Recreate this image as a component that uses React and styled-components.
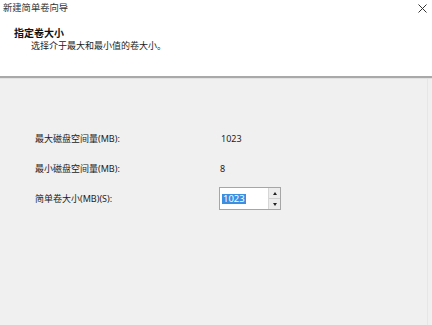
import React from "react";
import styled, { createGlobalStyle } from "styled-components";

const Global = createGlobalStyle`
  html, body {
    margin: 0;
    padding: 0;
    background: #f0f0f0;
  }
  * {
    box-sizing: border-box;
  }
`;

const font = `"Noto Sans", "Noto Sans CJK SC", sans-serif`;

const Window = styled.div`
  width: 432px;
  height: 325px;
  display: flex;
  flex-direction: column;
  font-family: ${font};
  color: #1a1a1a;
  overflow: hidden;
`;

const Top = styled.div`
  background: #fff;
  height: 79px;
  border-bottom: 1px solid #e2e2e2;
  box-shadow: inset 0 -2px 0 #a9a9a9;
  display: flex;
  flex-direction: column;
`;

const TitleBar = styled.div`
  height: 16px;
  display: flex;
  align-items: center;
  justify-content: space-between;
  padding: 0 5px 0 3px;
  font-size: 9.3px;
  line-height: 16px;
  color: #333;
`;

const Close = styled.svg`
  width: 9px;
  height: 9px;
`;

const Header = styled.div`
  display: flex;
  flex-direction: column;
  padding: 11px 0 0 14px;
`;

const Heading = styled.div`
  font-size: 10px;
  font-weight: 700;
  line-height: 12px;
  color: #111;
`;

const Sub = styled.div`
  font-size: 9px;
  line-height: 12px;
  margin: 1px 0 0 17px;
  color: #222;
`;

const Body = styled.div`
  flex: 1;
  background: #f0f0f0;
  padding-top: 48px;
  margin-right: 4px;
  border-right: 1px solid #e6e6e6;
`;

const Form = styled.div`
  display: grid;
  grid-template-columns: 184px auto;
  grid-auto-rows: 23px;
  row-gap: 7px;
  padding-left: 35px;
  align-items: center;
  font-size: 9px;
`;

const Label = styled.div`
  line-height: 12px;
  color: #222;
`;

const Value = styled.div`
  line-height: 12px;
  padding-left: ${(p) => p.$pad || 2}px;
  color: #222;
`;

const Spin = styled.div`
  display: flex;
  width: 62px;
  height: 23px;
  border: 1px solid #a6a6a6;
  background: #fff;
`;

const SpinField = styled.div`
  flex: 1;
  display: flex;
  align-items: center;
  padding-left: 2px;
`;

const Selected = styled.span`
  background: #3b8ee0;
  color: #fff;
  font-size: 9.5px;
  line-height: 10px;
  padding: 0 1px;
`;

const SpinButtons = styled.div`
  width: 12px;
  display: flex;
  flex-direction: column;
  border-left: 1px solid #d6d6d6;
  background: #ececec;
`;

const SpinBtn = styled.div`
  flex: 1;
  display: flex;
  align-items: center;
  justify-content: center;
  & + & {
    border-top: 1px solid #d0d0d0;
  }
  &::before {
    content: "";
    border-left: 2.5px solid transparent;
    border-right: 2.5px solid transparent;
    ${(p) =>
      p.$down
        ? "border-top: 3px solid #222;"
        : "border-bottom: 3px solid #222;"}
  }
`;

export default function App() {
  return (
    <>
      <Global />
      <Window>
        <Top>
          <TitleBar>
            <span>新建简单卷向导</span>
            <Close viewBox="0 0 9 9">
              <path d="M0.5 0.5L8.5 8.5M8.5 0.5L0.5 8.5" stroke="#333" strokeWidth="1" />
            </Close>
          </TitleBar>
          <Header>
            <Heading>指定卷大小</Heading>
            <Sub>选择介于最大和最小值的卷大小。</Sub>
          </Header>
        </Top>
        <Body>
          <Form>
            <Label>最大磁盘空间量(MB):</Label>
            <Value>1023</Value>
            <Label>最小磁盘空间量(MB):</Label>
            <Value $pad={1}>8</Value>
            <Label>简单卷大小(MB)(S):</Label>
            <Spin>
              <SpinField>
                <Selected>1023</Selected>
              </SpinField>
              <SpinButtons>
                <SpinBtn />
                <SpinBtn $down />
              </SpinButtons>
            </Spin>
          </Form>
        </Body>
      </Window>
    </>
  );
}
